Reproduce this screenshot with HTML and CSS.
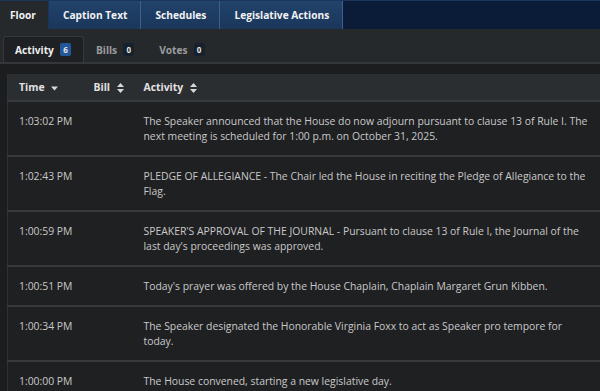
FILE: index.html
```html
<!DOCTYPE html>
<html lang="en">
<head>
    <meta charset="UTF-8">
    <meta name="viewport" content="width=device-width, initial-scale=1.0">
    <title>Floor Activity</title>
    <link rel="stylesheet" href="styles.css">
</head>
<body>

    <!-- Main tabs -->
    <div class="main-tabs">
        <div class="main-tab active">Floor</div>
        <div class="main-tab">Caption Text</div>
        <div class="main-tab">Schedules</div>
        <div class="main-tab">Legislative Actions</div>
    </div>

    <!-- Sub tabs -->
    <div class="sub-tabs">
        <div class="sub-tab active">Activity <span class="badge on">6</span></div>
        <div class="sub-tab">Bills <span class="badge">0</span></div>
        <div class="sub-tab">Votes <span class="badge">0</span></div>
    </div>

    <!-- Activity table -->
    <div class="table-wrap">
        <table class="activity">
            <colgroup>
                <col class="col-time">
                <col class="col-bill">
                <col>
            </colgroup>
            <thead>
                <tr>
                    <th>Time
                        <svg class="caret" width="7" height="5" viewBox="0 0 7 5"><path d="M0 0.5h7L3.5 4.5z" fill="#d8d8d8"/></svg>
                    </th>
                    <th>Bill
                        <svg class="sort" width="7" height="10" viewBox="0 0 7 10"><path d="M0 4h7L3.5 0z M0 6h7L3.5 10z" fill="#d8d8d8"/></svg>
                    </th>
                    <th>Activity
                        <svg class="sort" width="7" height="10" viewBox="0 0 7 10"><path d="M0 4h7L3.5 0z M0 6h7L3.5 10z" fill="#d8d8d8"/></svg>
                    </th>
                </tr>
            </thead>
            <tbody>
                <tr>
                    <td>1:03:02 PM</td>
                    <td></td>
                    <td>The Speaker announced that the House do now adjourn pursuant to clause 13 of Rule I. The next meeting is scheduled for 1:00 p.m. on October 31, 2025.</td>
                </tr>
                <tr>
                    <td>1:02:43 PM</td>
                    <td></td>
                    <td>PLEDGE OF ALLEGIANCE - The Chair led the House in reciting the Pledge of Allegiance to the Flag.</td>
                </tr>
                <tr>
                    <td>1:00:59 PM</td>
                    <td></td>
                    <td>SPEAKER'S APPROVAL OF THE JOURNAL - Pursuant to clause 13 of Rule I, the Journal of the last day's proceedings was approved.</td>
                </tr>
                <tr>
                    <td>1:00:51 PM</td>
                    <td></td>
                    <td>Today's prayer was offered by the House Chaplain, Chaplain Margaret Grun Kibben.</td>
                </tr>
                <tr>
                    <td>1:00:34 PM</td>
                    <td></td>
                    <td>The Speaker designated the Honorable Virginia Foxx to act as Speaker pro tempore for today.</td>
                </tr>
                <tr>
                    <td>1:00:00 PM</td>
                    <td></td>
                    <td>The House convened, starting a new legislative day.</td>
                </tr>
            </tbody>
        </table>
    </div>

</body>
</html>
```

FILE: styles.css
```css
/* Base */
html {
    overflow: hidden;
}

body {
    margin: 0;
    background: #1c1d1f;
    font-family: "Open Sans", Arial, sans-serif;
    color: #c9c9c9;
}

/* Main tabs */
.main-tabs {
    display: flex;
    height: 28px;
    background: #0a1c37;
    border-top: 1px solid #1b355c;
}

.main-tab {
    display: flex;
    align-items: center;
    padding: 0 13px 0 14px;
    font-size: 10.2px;
    font-weight: 700;
    color: #f2f2f2;
    background: linear-gradient(#22436c, #1a365a);
    border-right: 1px solid #3d5f88;
}

.main-tab.active {
    padding: 0 12px 0 10px;
    background: #26292c;
    border-right: 1px solid #16345c;
}

/* Sub tabs */
.sub-tabs {
    display: flex;
    height: 26px;
    padding: 7px 0 0 3px;
    background: #26292c;
    border-bottom: 2px solid #34373a;
}

.sub-tab {
    display: flex;
    align-items: center;
    gap: 6px;
    padding: 0 12px 0 11px;
    font-size: 10.2px;
    font-weight: 700;
    color: #9b9c9e;
    border: 1px solid transparent;
    border-bottom: none;
    border-radius: 3px 3px 0 0;
}

.sub-tab.active {
    color: #ececec;
    background: #1e2023;
    border-color: #36393c;
}

.badge {
    display: inline-block;
    min-width: 11px;
    height: 13px;
    line-height: 13px;
    font-size: 8px;
    font-weight: 700;
    text-align: center;
    color: #e6e6e6;
    background: #17212d;
    border-radius: 2px;
}

.badge.on {
    background: #22579a;
}

/* Table */
.table-wrap {
    padding: 10px 0 0 7px;
}

.activity {
    width: 100%;
    table-layout: fixed;
    border-collapse: collapse;
    font-size: 10.4px;
    border-left: 1px solid #2e3033;
}

.col-time {
    width: 75px;
}

.col-bill {
    width: 50px;
}

.activity th {
    height: 26px;
    padding: 0 11px;
    text-align: left;
    font-size: 10.4px;
    font-weight: 700;
    color: #e2e2e2;
    background: #2b2e31;
    white-space: nowrap;
}

.activity th svg {
    margin-left: 4px;
    vertical-align: middle;
}

.activity td {
    padding: 12px 8px 11px 11px;
    line-height: 15px;
    vertical-align: top;
    background: #1f2022;
    border-top: 2px solid #37393c;
}

.activity td:first-child {
    white-space: nowrap;
}
```
